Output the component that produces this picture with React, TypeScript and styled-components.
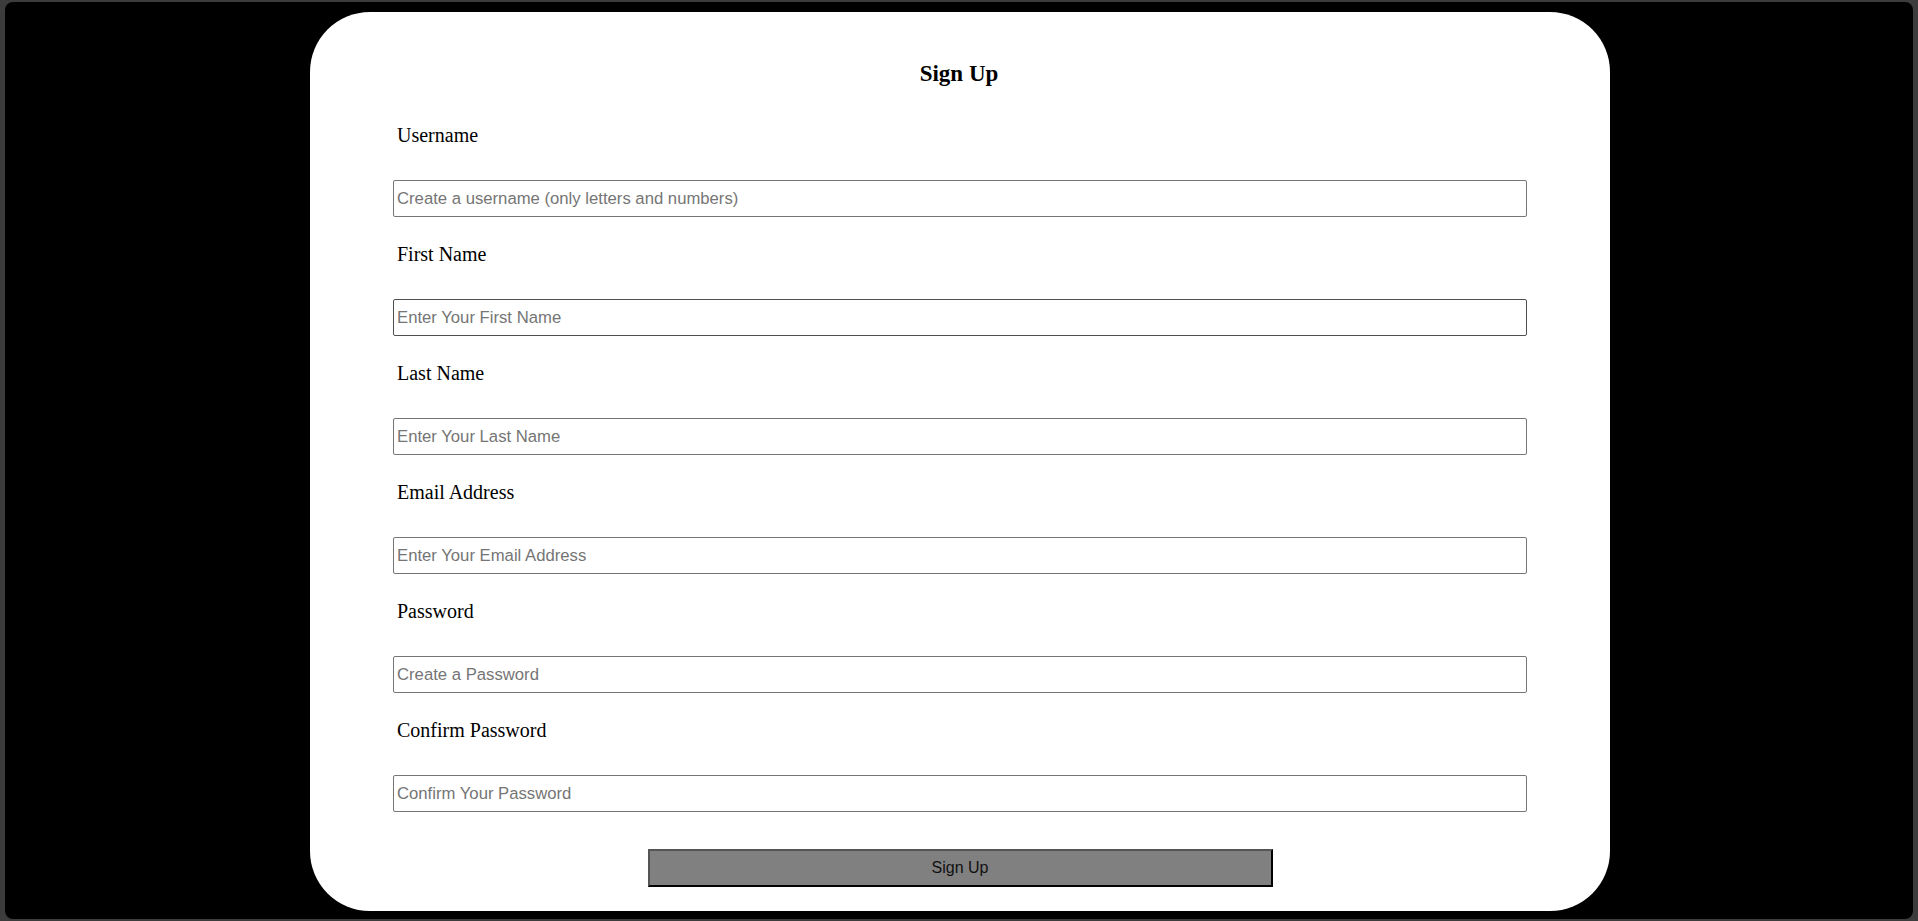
import React from "react";
import styled, { createGlobalStyle } from "styled-components";

const GlobalStyle = createGlobalStyle`
  html, body {
    margin: 0;
    padding: 0;
    background: #3c3c3c;
  }
  * { box-sizing: border-box; }
`;

const Page = styled.div`
  width: 1918px;
  height: 921px;
  padding: 2px 5px 2px 5px;
`;

const Frame = styled.main`
  height: 100%;
  background: #000;
  border-radius: 8px;
  display: flex;
  justify-content: center;
  padding-top: 10px;
`;

const Card = styled.form`
  width: 1300px;
  height: 899px;
  margin-left: 2px;
  background: #fff;
  border-radius: 60px;
  padding: 49px 83px 0 83px;
  display: flex;
  flex-direction: column;
`;

const Title = styled.h2`
  margin: 0 0 37px 0;
  padding-right: 2px;
  font-family: "Liberation Serif", "Times New Roman", serif;
  font-size: 23px;
  line-height: 26px;
  font-weight: bold;
  text-align: center;
  color: #000;
`;

const Field = styled.div`
  display: flex;
  flex-direction: column;
  & + & {
    margin-top: 26px;
  }
`;

const Label = styled.label`
  font-family: "Liberation Serif", "Times New Roman", serif;
  font-size: 20px;
  line-height: 23px;
  color: #000;
  padding-left: 4px;
  margin-bottom: 33px;
`;

const Input = styled.input<{ $hovered?: boolean }>`
  width: 100%;
  height: 37px;
  margin: 0;
  padding: 0 3px;
  border: 1px solid ${(p) => (p.$hovered ? "#4f4f4f" : "#767676")};
  border-radius: 2px;
  font-family: "Liberation Sans", Arial, sans-serif;
  font-size: 16.7px;
  color: #000;
  background: #fff;
  outline: none;
  &::placeholder {
    color: #757575;
  }
`;

const SubmitButton = styled.button`
  align-self: center;
  width: 625px;
  height: 38px;
  margin-top: 37px;
  padding: 0;
  background: #808080;
  border-style: solid;
  border-width: 2px;
  border-color: #555 #000 #000 #555;
  font-family: "Liberation Sans", Arial, sans-serif;
  font-size: 16px;
  color: #111;
  cursor: pointer;
`;

const fields = [
  { id: "username", label: "Username", placeholder: "Create a username (only letters and numbers)", type: "text" },
  { id: "firstName", label: "First Name", placeholder: "Enter Your First Name", type: "text", hovered: true },
  { id: "lastName", label: "Last Name", placeholder: "Enter Your Last Name", type: "text" },
  { id: "email", label: "Email Address", placeholder: "Enter Your Email Address", type: "email" },
  { id: "password", label: "Password", placeholder: "Create a Password", type: "password" },
  { id: "confirm", label: "Confirm Password", placeholder: "Confirm Your Password", type: "password" },
];

export default function App() {
  return (
    <>
      <GlobalStyle />
      <Page>
        <Frame>
          <Card onSubmit={(e) => e.preventDefault()}>
            <Title>Sign Up</Title>
            {fields.map((f) => (
              <Field key={f.id}>
                <Label htmlFor={f.id}>{f.label}</Label>
                <Input id={f.id} type={f.type} placeholder={f.placeholder} $hovered={f.hovered} />
              </Field>
            ))}
            <SubmitButton type="submit">Sign Up</SubmitButton>
          </Card>
        </Frame>
      </Page>
    </>
  );
}
